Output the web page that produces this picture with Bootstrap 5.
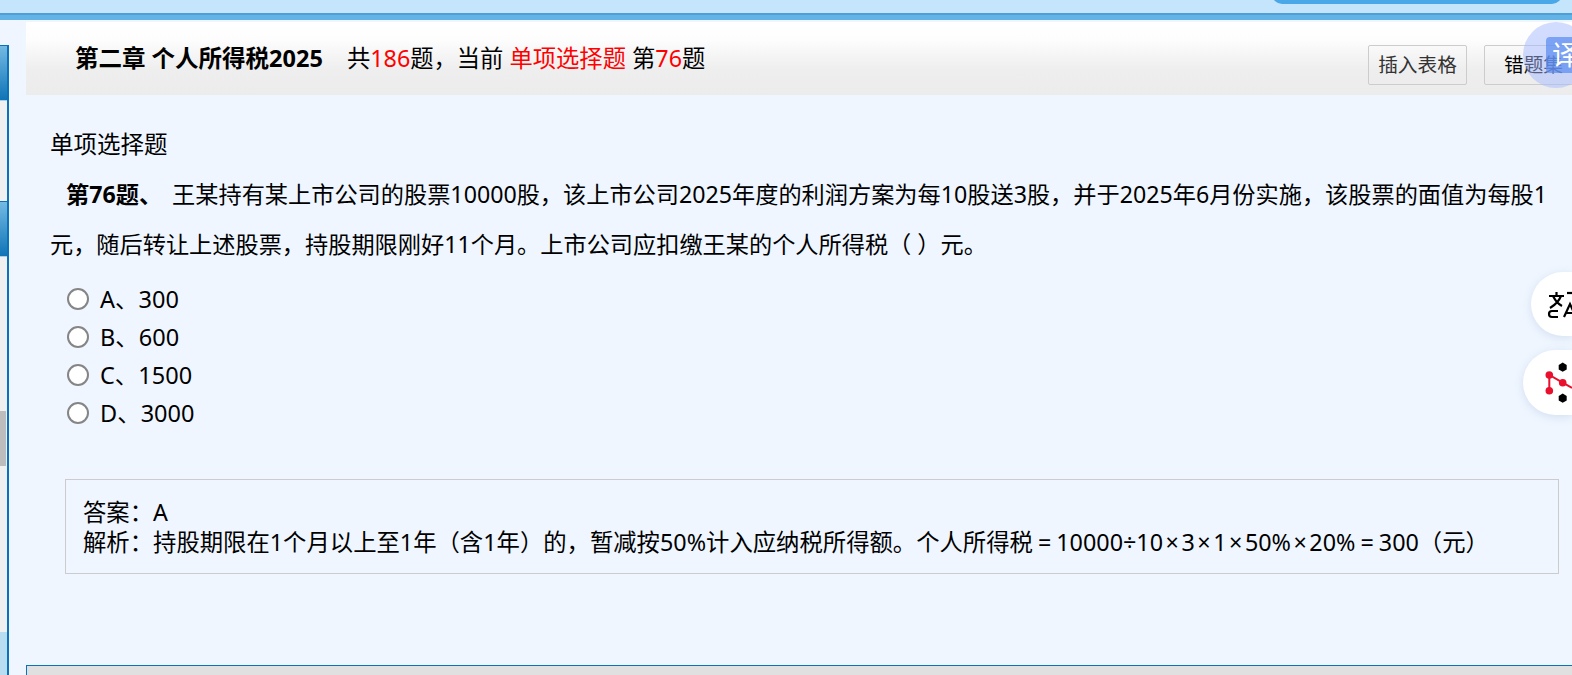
<!DOCTYPE html>
<html lang="zh-CN">
<head>
    <meta charset="UTF-8">
    <meta name="viewport" content="width=device-width, initial-scale=1.0">
    <link href="https://cdn.jsdelivr.net/npm/bootstrap@5.3.3/dist/css/bootstrap.min.css" rel="stylesheet" />
    <script src="https://cdn.jsdelivr.net/npm/bootstrap@5.3.3/dist/js/bootstrap.bundle.min.js"></script>
    <title>第二章 个人所得税2025</title>
    <style>
        html, body { height: 675px; overflow: hidden; }
        body {
            position: relative;
            background: #eff6ff;
            color: #000;
            font-family: "Noto Sans", "Noto Sans CJK SC", sans-serif;
            font-size: 23.5px;
        }
        .top-strip { height: 20px; background: #c5e5fd; border-bottom: 7px solid #63b3e6; position: relative; }
        .top-strip::after { content: ""; position: absolute; left: 0; right: 0; top: 13px; height: 2px; background: #4f9fd6; }
        .top-pill { position: absolute; left: 1272px; top: -10px; width: 290px; height: 14px; background: #4aa8e8; border-radius: 0 0 10px 10px; }
        .page-wrap { height: 655px; }
        .side-strip { width: 9px; margin-top: 25px; background: #f0f0f0; border-right: 2px solid #0a72b8; flex: none; position: relative; }
        .side-head { height: 56px; background: linear-gradient(#74bae4, #0f74b6); border-top: 1px solid #0a72b8; border-bottom: 1px solid #a8cfe6; }
        .side-gap { height: 100px; }
        .side-thumb { position: absolute; left: 0; top: 366px; width: 6px; height: 55px; background: #bdbdbd; }
        .side-foot { position: absolute; left: 0; right: 0; top: 587px; bottom: 0; background: #b8dcf0; }
        .main-col { min-width: 0; flex: 1; padding-top: 2px; }
        .chapter-bar {
            height: 73px;
            margin-left: 17px;
            background: linear-gradient(#fff 0, #fdfdfd 25%, #eeeeee 65%, #ececec 100%);
            padding-left: 49px;
        }
        .chapter-line { padding-top: 18px; line-height: 36px; white-space: nowrap; font-size: 23.3px; }
        .chapter-name { font-weight: 700; font-size: 23.5px; margin-right: 18px; }
        .red-text { color: #f00; }
        .bar-btn {
            position: absolute;
            top: 45px;
            height: 40px;
            padding: 0;
            background: transparent;
            border: 1px solid #ccc;
            border-radius: 2px;
            color: #333;
            font-size: 19.7px;
            line-height: 38px;
            text-align: center;
            white-space: nowrap;
        }
        .btn-table { left: 1368px; width: 99px; }
        .btn-wrong { left: 1484px; width: 100px; color: #000; text-align: left; padding-left: 19px; }
        .q-body { padding: 30px 20px 0 41px; }
        .q-type { line-height: 38px; }
        .q-text { line-height: 50px; margin: 6px 0 0 0; text-indent: 16px; font-size: 23.2px; }
        .q-no { font-weight: 700; margin-right: 4px; }
        .q-options { margin: 12px 0 0 17px; }
        .q-option { height: 38px; line-height: 36px; padding: 0 0 2px; margin: 0; display: flex; align-items: center; }
        .q-option .form-check-input {
            width: 22px;
            height: 22px;
            margin: 0 11px 0 0;
            float: none;
            background-color: #fff;
            border: 2px solid #858585;
        }
        .answer-box {
            margin: 46px 0 0 15px;
            width: 1494px;
            height: 95px;
            border: 1px solid #ccc;
            padding: 17px 17px 0;
            line-height: 30px;
            font-size: 23.35px;
            white-space: nowrap;
        }
        .times-sign { padding: 0 2.5px; }
        .equal-sign { margin: 0 5px; }
        .foot-bar {
            position: absolute;
            left: 26px;
            right: 0;
            top: 665px;
            height: 10px;
            background: #e0e0e0;
            border-top: 1px solid #0a72b8;
            border-left: 1px solid #0a72b8;
        }
        .trans-bubble {
            position: absolute;
            left: 1523px;
            top: 22px;
            width: 66px;
            height: 66px;
            border-radius: 50%;
            background: rgba(165, 185, 255, .5);
        }
        .trans-tile {
            position: absolute;
            left: 23px;
            top: 15px;
            width: 40px;
            height: 36px;
            border-radius: 4px;
            background: rgba(90, 140, 240, .72);
            color: #fff;
            font-size: 27px;
            line-height: 36px;
            padding-left: 6px;
        }
        .float-pill {
            position: absolute;
            background: #fff;
            border-radius: 33px 0 0 33px;
            box-shadow: 0 2px 10px rgba(90, 120, 170, .18);
            right: 0;
        }
        .pill-lang { left: 1531px; top: 272px; height: 64px; }
        .pill-graph { left: 1523px; top: 350px; height: 65px; }
        .float-pill svg { position: absolute; left: 0; top: 0; }
    </style>
</head>
<body>
    <div class="top-strip"><div class="top-pill"></div></div>

    <div class="page-wrap d-flex">
        <div class="side-strip">
            <div class="side-head"></div>
            <div class="side-gap"></div>
            <div class="side-head"></div>
            <div class="side-thumb"></div>
            <div class="side-foot"></div>
        </div>

        <div class="main-col">
            <div class="chapter-bar">
                <div class="chapter-line">
                    <span class="chapter-name">第二章 个人所得税2025</span>
                    共<span class="red-text">186</span>题，当前 <span class="red-text">单项选择题</span> 第<span class="red-text">76</span>题
                </div>
            </div>

            <div class="q-body">
                <div class="q-type">单项选择题</div>
                <p class="q-text"><span class="q-no">第76题、</span> 王某持有某上市公司的股票10000股，该上市公司2025年度的利润方案为每10股送3股，并于2025年6月份实施，该股票的面值为每股1元，随后转让上述股票，持股期限刚好11个月。上市公司应扣缴王某的个人所得税（ ）元。</p>

                <form class="q-options">
                    <label class="q-option"><input class="form-check-input" type="radio" name="answer">A、300</label>
                    <label class="q-option"><input class="form-check-input" type="radio" name="answer">B、600</label>
                    <label class="q-option"><input class="form-check-input" type="radio" name="answer">C、1500</label>
                    <label class="q-option"><input class="form-check-input" type="radio" name="answer">D、3000</label>
                </form>

                <div class="answer-box">
                    <div>答案：A</div>
                    <div>解析：持股期限在1个月以上至1年（含1年）的，暂减按50%计入应纳税所得额。个人所得税<span class="equal-sign">=</span>10000÷10<span class="times-sign">×</span>3<span class="times-sign">×</span>1<span class="times-sign">×</span>50%<span class="times-sign">×</span>20%<span class="equal-sign">=</span>300（元）</div>
                </div>
            </div>
        </div>
    </div>

    <button type="button" class="btn bar-btn btn-table">插入表格</button>
    <button type="button" class="btn bar-btn btn-wrong">错题集</button>
    <div class="foot-bar"></div>

    <div class="trans-bubble"><div class="trans-tile">译</div></div>

    <div class="float-pill pill-lang">
        <svg width="41" height="64" viewBox="0 0 41 64" fill="none" stroke="#000" stroke-width="2.2">
            <path d="M18 24h15M25.5 20v4M30 24c-2 5-6 9-11 12M22 24c2 4 5 8 9 10"/>
            <path d="M27 39h-6c-2 0-3 1-3 3s1 3 3 3h6"/>
            <path d="M33 45l6-13 6 13M35 41h8"/>
            <path d="M36 21h5"/>
        </svg>
    </div>

    <div class="float-pill pill-graph">
        <svg width="49" height="65" viewBox="0 0 49 65">
            <path d="M39.7 12.6l4 2.3v4.6l-4 2.3-4-2.3v-4.6z" fill="#000"/>
            <path d="M39.7 43.6l4 2.3v4.6l-4 2.3-4-2.3v-4.6z" fill="#000"/>
            <path d="M26.3 40.7V25l13.4 7.7L49 38" fill="none" stroke="#e8102c" stroke-width="2"/>
            <circle cx="26.3" cy="25" r="3.8" fill="#e8102c"/>
            <circle cx="26.3" cy="40.7" r="3.8" fill="#e8102c"/>
            <circle cx="39.7" cy="32.7" r="3.8" fill="#e8102c"/>
        </svg>
    </div>
</body>
</html>
